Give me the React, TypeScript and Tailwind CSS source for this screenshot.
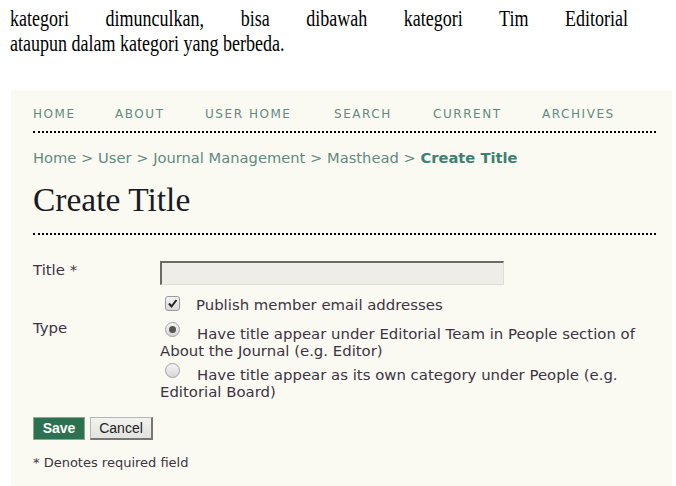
import React from "react";

const sans = { fontFamily: '"DejaVu Sans", Verdana, sans-serif' };

function Dotted() {
  return <div className="h-0 border-b-2 border-dotted border-black" />;
}

function Radio({ checked }: { checked?: boolean }) {
  return (
    <span className="relative -top-[6px] inline-flex align-middle ml-[5px] mr-[17px] w-[15px] h-[15px] rounded-full border border-[#a0a0a0] bg-gradient-to-b from-[#f6f6f6] to-[#d6d6d6] items-center justify-center">
      {checked && <span className="w-[7px] h-[7px] rounded-full bg-[#555]" />}
    </span>
  );
}

export default function App() {
  const nav = ["HOME", "ABOUT", "USER HOME", "SEARCH", "CURRENT", "ARCHIVES"];
  const widths = ["w-[82px]", "w-[90px]", "w-[129px]", "w-[99px]", "w-[109px]", ""];
  return (
    <div className="w-[676px] h-[486px] overflow-hidden bg-white">
      {/* intro paragraph, condensed serif */}
      <div className="h-[56px] pt-[6px] pl-[10px]">
        <div
          className="w-[824px] origin-top-left scale-x-[0.75] text-[24px] leading-[25px] text-black"
          style={{ fontFamily: '"Liberation Serif", serif' }}
        >
          <div className="text-justify [text-align-last:justify]">
            kategori dimunculkan, bisa dibawah kategori Tim Editorial
          </div>
          <div>ataupun dalam kategori yang berbeda.</div>
        </div>
      </div>

      {/* journal page */}
      <div
        className="ml-[11px] mt-[34px] w-[661px] h-[400px] bg-[#fbfaf2] pl-[22px] pr-[16px] pt-[16px]"
        style={sans}
      >
        <div className="flex text-[12px] tracking-[1.55px] text-[#5f8a82] h-[16px] items-center">
          {nav.map((n, i) => (
            <span key={n} className={widths[i]}>
              {n}
            </span>
          ))}
        </div>
        <div className="mt-[9px]">
          <Dotted />
        </div>
        <div className="mt-[16px] text-[14.7px] text-[#5f8a82] leading-[18px] whitespace-nowrap">
          Home &gt; User &gt; Journal Management &gt; Masthead &gt;{" "}
          <span className="font-bold text-[#3f7f74]">Create Title</span>
        </div>
        <h1
          className="mt-[14px] text-[33.5px] leading-[38px] text-[#1a1a24]"
          style={{ fontFamily: '"Liberation Serif", Georgia, serif' }}
        >
          Create Title
        </h1>
        <div className="mt-[14px]">
          <Dotted />
        </div>

        <div className="mt-[26px] grid grid-cols-[127px_480px] text-[14.9px] text-[#3d3344] leading-[17px]">
          <div className="pt-[1px]">Title *</div>
          <div>
            <div className="w-[344px] h-[24px] bg-[#eeede8] border-t-2 border-l-2 border-[#6b6b66] border-r border-b border-r-[#dddcd5] border-b-[#dddcd5]" />
            <label className="flex items-center mt-[12px] gap-[16px] pl-[5px]">
              <span className="w-[15px] h-[15px] -mt-[5px] rounded-[3px] border border-[#9a9a9a] bg-gradient-to-b from-[#f4f4f4] to-[#d8d8d8] flex items-center justify-center">
                <svg width="11" height="11" viewBox="0 0 11 11">
                  <path d="M2 5.5 L4.5 8.5 L9.5 2" stroke="#222" strokeWidth="2" fill="none" />
                </svg>
              </span>
              <span>Publish member email addresses</span>
            </label>
          </div>

          <div className="pt-[6px]">Type</div>
          <div className="pt-[12px]">
            <div>
              <Radio checked />
              Have title appear under Editorial Team in People section of About the Journal (e.g. Editor)
            </div>
            <div className="mt-[7px]">
              <Radio />
              Have title appear as its own category under People (e.g. Editorial Board)
            </div>
          </div>
        </div>

        <div className="mt-[16px] flex gap-[5px]">
          <button
            className="h-[23px] w-[52px] bg-[#2d7250] text-white text-[14px] font-bold border border-[#8ca894]"
            style={{ fontFamily: '"Liberation Sans", Arial, sans-serif' }}
          >
            Save
          </button>
          <button
            className="h-[23px] w-[63px] bg-gradient-to-b from-[#f2f2ef] to-[#e2e2de] text-[#222] text-[14px] border border-[#b5b5b5] border-r-2 border-b-2 border-r-[#777] border-b-[#777]"
            style={{ fontFamily: '"Liberation Sans", Arial, sans-serif' }}
          >
            Cancel
          </button>
        </div>
        <div className="mt-[15px] text-[13px] leading-[16px] text-[#3d3344]">* Denotes required field</div>
      </div>
    </div>
  );
}
